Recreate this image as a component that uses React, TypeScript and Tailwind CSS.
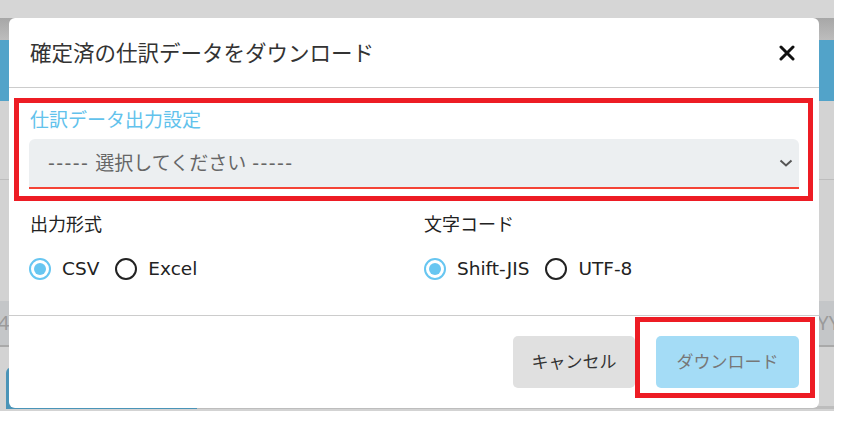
import React, { useState } from 'react';

const font = { fontFamily: '"Noto Sans", "Noto Sans CJK JP", sans-serif' };
const latin = { fontFamily: '"DejaVu Sans", "Noto Sans CJK JP", sans-serif' };

const Radio: React.FC<{ checked: boolean; label: string; onClick: () => void }> = ({ checked, label, onClick }) => (
  <button type="button" onClick={onClick} className="flex items-center gap-[11px] text-[18.5px] text-[#222]">
    {checked ? (
      <span className="w-[22px] h-[22px] rounded-full border-[2.5px] border-[#67c6f1] flex items-center justify-center">
        <span className="w-[12px] h-[12px] rounded-full bg-[#67c6f1]" />
      </span>
    ) : (
      <span className="w-[22px] h-[22px] rounded-full border-2 border-[#222]" />
    )}
    <span style={latin}>{label}</span>
  </button>
);

const App: React.FC = () => {
  const [format, setFormat] = useState('csv');
  const [encoding, setEncoding] = useState('sjis');

  return (
    <div className="w-[847px] h-[435px] bg-white" style={font}>
      <div className="relative w-[834px] h-[411px] bg-[#d3d3d3] overflow-hidden">
        {/* page under the backdrop */}
        <div className="h-[18px] bg-[#d6d6d6]" />
        <div className="h-[22px] bg-gradient-to-b from-[#a7a7a7] to-[#bdbdbd]" />
        <div className="h-[61px] bg-[#52a3c9]" />
        <div className="h-[79px] bg-[#d3d3d3] border-b border-[#bdbdbd]" />
        <div className="h-[121px] bg-[#d2d2d2]" />
        <div className="h-[46px] bg-[#c4c6c8] border-b-2 border-[#a9a9a9] flex items-center justify-between text-[20px] text-[#9a9a9a]">
          <span className="-ml-[2px]">4</span>
          <span className="-mr-[6px]">YY</span>
        </div>
        <div className="h-[62px] flex flex-col justify-end">
          <div className="flex items-end">
            <div className="ml-[6px] w-[191px] h-[42px] bg-[#4a94b8] rounded-tl-[6px]" />
            <div className="flex-1 h-[3px] bg-[#bdbdbd]" />
          </div>
        </div>

        {/* modal */}
        <div className="absolute left-[9px] top-[18px] w-[810px] h-[390px] bg-white rounded-[6px] flex flex-col">
          <div className="h-[70px] flex items-center justify-between pl-[21px] pr-[24px] border-b border-[#cccccc]">
            <h2 className="text-[21.5px] text-[#333] pt-[2px]">確定済の仕訳データをダウンロード</h2>
            <svg width="16" height="16" viewBox="0 0 16 16" className="mt-[1px]">
              <path d="M2 2 14 14M14 2 2 14" stroke="#111" strokeWidth="3" strokeLinecap="round" />
            </svg>
          </div>

          <div className="px-[20px] pt-[19px] h-[228px] border-b border-[#cccccc]">
            <div className="text-[19px] leading-[26px] text-[#62c2ec] pl-[1px]">仕訳データ出力設定</div>
            <div className="mt-[6px] h-[50px] bg-[#eceff1] rounded-t-[6px] border-b-2 border-[#f44336] flex items-center justify-between pl-[19px] pr-[6px]">
              <span className="text-[19px] text-[#666]" style={latin}>
                <span className="tracking-[1.4px]">-----</span> 選択してください <span className="tracking-[1.4px]">-----</span>
              </span>
              <svg width="14" height="8" viewBox="0 0 14 8">
                <path d="M1.5 1.5 7 6.5 12.5 1.5" fill="none" stroke="#555" strokeWidth="2" />
              </svg>
            </div>

            <div className="grid grid-cols-[395px_1fr] mt-[22px]">
              <div>
                <div className="text-[18px] leading-[26px] text-[#222] pl-[1px]">出力形式</div>
                <div className="flex items-center gap-[16px] mt-[18px]">
                  <Radio checked={format === 'csv'} label="CSV" onClick={() => setFormat('csv')} />
                  <Radio checked={format === 'excel'} label="Excel" onClick={() => setFormat('excel')} />
                </div>
              </div>
              <div>
                <div className="text-[18px] leading-[26px] text-[#222]">文字コード</div>
                <div className="flex items-center gap-[16px] mt-[18px]">
                  <Radio checked={encoding === 'sjis'} label="Shift-JIS" onClick={() => setEncoding('sjis')} />
                  <Radio checked={encoding === 'utf8'} label="UTF-8" onClick={() => setEncoding('utf8')} />
                </div>
              </div>
            </div>
          </div>

          <div className="flex-1 flex items-center justify-end gap-[21px] pr-[20px]">
            <button className="w-[122px] h-[52px] rounded-[5px] bg-[#e0e0e0] text-[17px] text-[#333]">キャンセル</button>
            <button className="w-[143px] h-[52px] rounded-[5px] bg-[#a4dcf6] text-[17px] text-[#777]">ダウンロード</button>
          </div>

          {/* annotation boxes */}
          <div className="absolute left-[5px] top-[80px] w-[799px] h-[103px] border-[5px] border-[#ed1c24] pointer-events-none" />
          <div className="absolute left-[626px] top-[299px] w-[180px] h-[81px] border-[5px] border-[#ed1c24] pointer-events-none" />
        </div>
      </div>
    </div>
  );
};

export default App;
